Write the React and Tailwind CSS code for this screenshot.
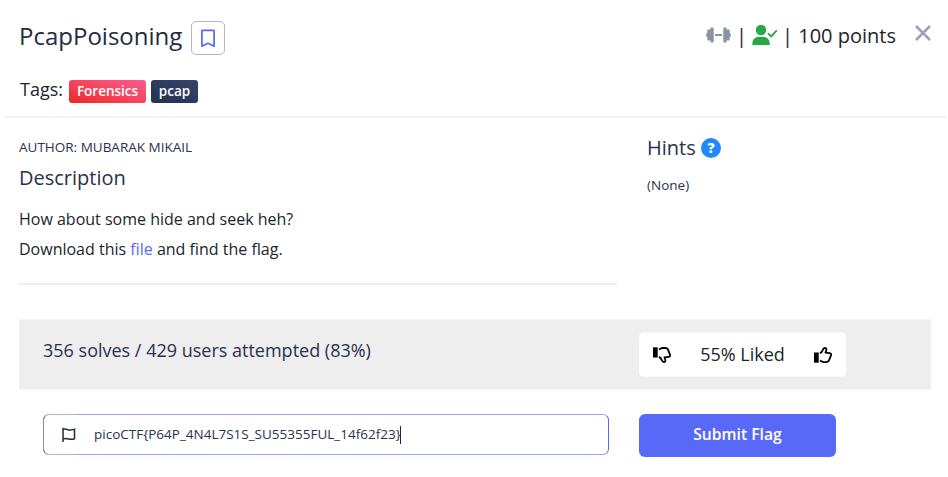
import React from "react";

const Bookmark = () => (
  <svg width="14" height="19" viewBox="0 0 14 19" fill="none" stroke="#5869f7" strokeWidth="1.7" className="block" aria-hidden="true">
    <path d="M.9 1.400h12.200v15.800L7 14.200.9 17.200z" strokeLinejoin="round" />
  </svg>
);

const Dumbbell = () => (
  <svg width="25" height="16" viewBox="0 0 25 16" fill="#8a93a2" className="block" aria-hidden="true">
    <path d="M4.500.5H6.500Q7.700.5 7.700 1.700V14.300Q7.700 15.500 6.500 15.500H4.500V13.500H2.300Q1.300 13.500 1.300 12.500V9.500H.2V6.500H1.300V3.500Q1.300 2.500 2.300 2.500H4.500z" />
    <path d="M20.500.5H18.500Q17.300.5 17.300 1.700V14.300Q17.300 15.500 18.500 15.500H20.500V13.500H22.700Q23.700 13.500 23.700 12.500V9.500H24.800V6.500H23.700V3.500Q23.700 2.500 22.700 2.500H20.500z" />
    <path d="M9 7h7v2H9z" />
  </svg>
);

const UserCheck = () => (
  <svg width="26" height="22" viewBox="0 0 26 22" className="block" aria-hidden="true">
    <circle cx="9" cy="6" r="5.200" fill="#28a745" />
    <path d="M.4 21v-1.500C.4 15.500 3 13 6.500 13h5c3.500 0 6.200 2.500 6.200 6.500V21z" fill="#28a745" />
    <path d="m16 9.300 3.100 3.100 5.700-6" fill="none" stroke="#28a745" strokeWidth="1.900" />
  </svg>
);

const Flag = () => (
  <svg width="16" height="18" viewBox="0 0 16 18" fill="none" stroke="#1f2a3c" strokeWidth="1.700" className="block" aria-hidden="true">
    <path d="M1.200.8v16.200M1.200 2.600c3-1.300 5.600 1 8.300.8 2-.1 3.200-.6 4.800-1.100v10.900c-2.500.8-4.200 1-6.500.4-2.600-.7-4.200-1-6.600-.1" />
  </svg>
);

const Thumb = ({ down = false }) => (
  <svg width="18" height="16" viewBox="0 0 18 16" className={down ? "block -scale-y-100" : "block"} aria-hidden="true">
    <path d="M0 5.500h4.700v10.200H0z" fill="#000" />
    <path d="M5.900 6.200c1.500-.6 2.200-1.700 2.700-2.900C9.200 1.700 9.800 1 10.800.9c1.300 0 1.700 1 1.500 2.200-.1 1-.6 1.800-.8 2.500l4.200.5c1.500.2 1.800 1 1.300 2.300l-2 4.900c-.5 1.300-1.100 1.600-2.500 1.700l-3 .1c-1.500 0-2.300-1.300-3.600-1.500" fill="none" stroke="#000" strokeWidth="1.800" strokeLinejoin="round" />
  </svg>
);

export default function App() {
  return (
    <main className="h-[477px] w-[948px] overflow-hidden bg-white font-['Open_Sans',sans-serif] text-[#212529]">
      <header className="ml-1 mr-0.5 h-[118px] border-b-2 border-[#f3f3f3] pl-[15px]">
        <div className="flex h-[72px] items-start justify-between">
          <div className="flex pt-[21px]">
            <h1 className="-mt-px w-[172px] whitespace-nowrap text-2xl leading-[31px] text-[#232b41]">PcapPoisoning</h1>
            <button className="flex h-[34px] w-[34px] items-center justify-center rounded-[5px] border border-[#b1b7c1]" aria-label="Bookmark">
              <Bookmark />
            </button>
          </div>
          <div className="flex items-start pr-[15px] text-xl leading-[30px]">
            <div className="mt-[27px]"><Dumbbell /></div>
            <span className="ml-[5px] mt-[21px]">|</span>
            <div className="ml-[5px] mt-6"><UserCheck /></div>
            <span className="ml-1 mt-[21px] whitespace-nowrap">| 100 points</span>
            <svg width="16" height="16" viewBox="0 0 16 16" className="ml-[19px] mt-[25px] block" stroke="#9aa2bf" strokeWidth="2.600" aria-label="Close">
              <path d="m1 1 14 14M15 1 1 15" />
            </svg>
          </div>
        </div>
        <div className="flex pt-[3px]">
          <span className="w-[50px] pl-px text-[18px] leading-[28px]">Tags:</span>
          <span className="mt-[5px] flex h-[23px] w-[77px] items-center justify-center rounded-[3px] bg-linear-to-tr from-[#ee251c] to-[#fc5a8d] pb-px text-[13.500px] font-semibold text-white">Forensics</span>
          <span className="ml-[5px] mt-[5px] flex h-[23px] w-[47px] items-center justify-center rounded-[3px] bg-linear-to-tr from-[#29324b] to-[#32446f] pb-px text-[13.500px] font-semibold text-white">pcap</span>
        </div>
      </header>

      <div className="flex h-[201px] pl-[19px]">
        <section className="h-[167px] w-[598px] border-b-2 border-[#f0f0f0] pt-[19px]">
          <p className="text-[13.500px] leading-5 text-[#29324b]">AUTHOR: MUBARAK MIKAIL</p>
          <h2 className="mt-1.5 text-xl leading-[30px] text-[#29324b]">Description</h2>
          <div className="mt-[11px] text-base leading-[30px]">
            <p>How about some hide and seek heh?</p>
            <p>Download this <a className="text-[#5869f7]">file</a> and find the flag.</p>
          </div>
        </section>
        <section className="ml-[30px] pt-[15px] text-[#29324b]">
          <div className="flex items-center">
            <h2 className="w-[54px] text-xl leading-[30px]">Hints</h2>
            <span className="flex h-5 w-5 items-center justify-center rounded-full bg-[#2089fb] text-sm font-extrabold text-white">?</span>
          </div>
          <p className="mt-3 text-[13.500px] leading-5">(None)</p>
        </section>
      </div>

      <div className="ml-[19px] flex h-[71px] w-[912px] border-y border-[#f7f7f7] bg-[#eeeeee] pl-6">
        <p className="w-[596px] pt-[17px] text-[18px] leading-[27px] text-[#29324b]">356 solves / 429 users attempted (83%)</p>
        <div className="mt-3 flex h-[45px] w-[207px] items-center justify-between rounded-[5px] border-y border-[#f7f7f7] bg-white px-3.5">
          <Thumb down />
          <span className="text-[18px]">55% Liked</span>
          <Thumb />
        </div>
      </div>

      <div className="ml-[43px] mt-[23px] flex">
        <div className="mt-px flex h-[41px] w-[566px] rounded-[6px] border border-[#5869f7] border-y-[#9aa4fa] text-[13.500px] text-[#29324b]">
          <div className="-my-px -ml-px flex w-[33px] items-center rounded-l-[6px] border-y border-l border-[#8a93a2] border-y-[#b5bac4] pl-[18px]">
            <Flag />
          </div>
          <div className="flex items-center pl-[18px]">
            <span className="whitespace-nowrap">{"picoCTF{P64P_4N4L7S1S_SU55355FUL_14f62f23}"}</span>
            <span className="-ml-px h-[18px] w-px bg-[#1f2a3c]" />
          </div>
        </div>
        <button className="ml-[30px] mt-px h-[43px] w-[197px] rounded-[6px] bg-[#5869f7] pb-px text-[15.700px] font-semibold text-white">Submit Flag</button>
      </div>
    </main>
  );
}
